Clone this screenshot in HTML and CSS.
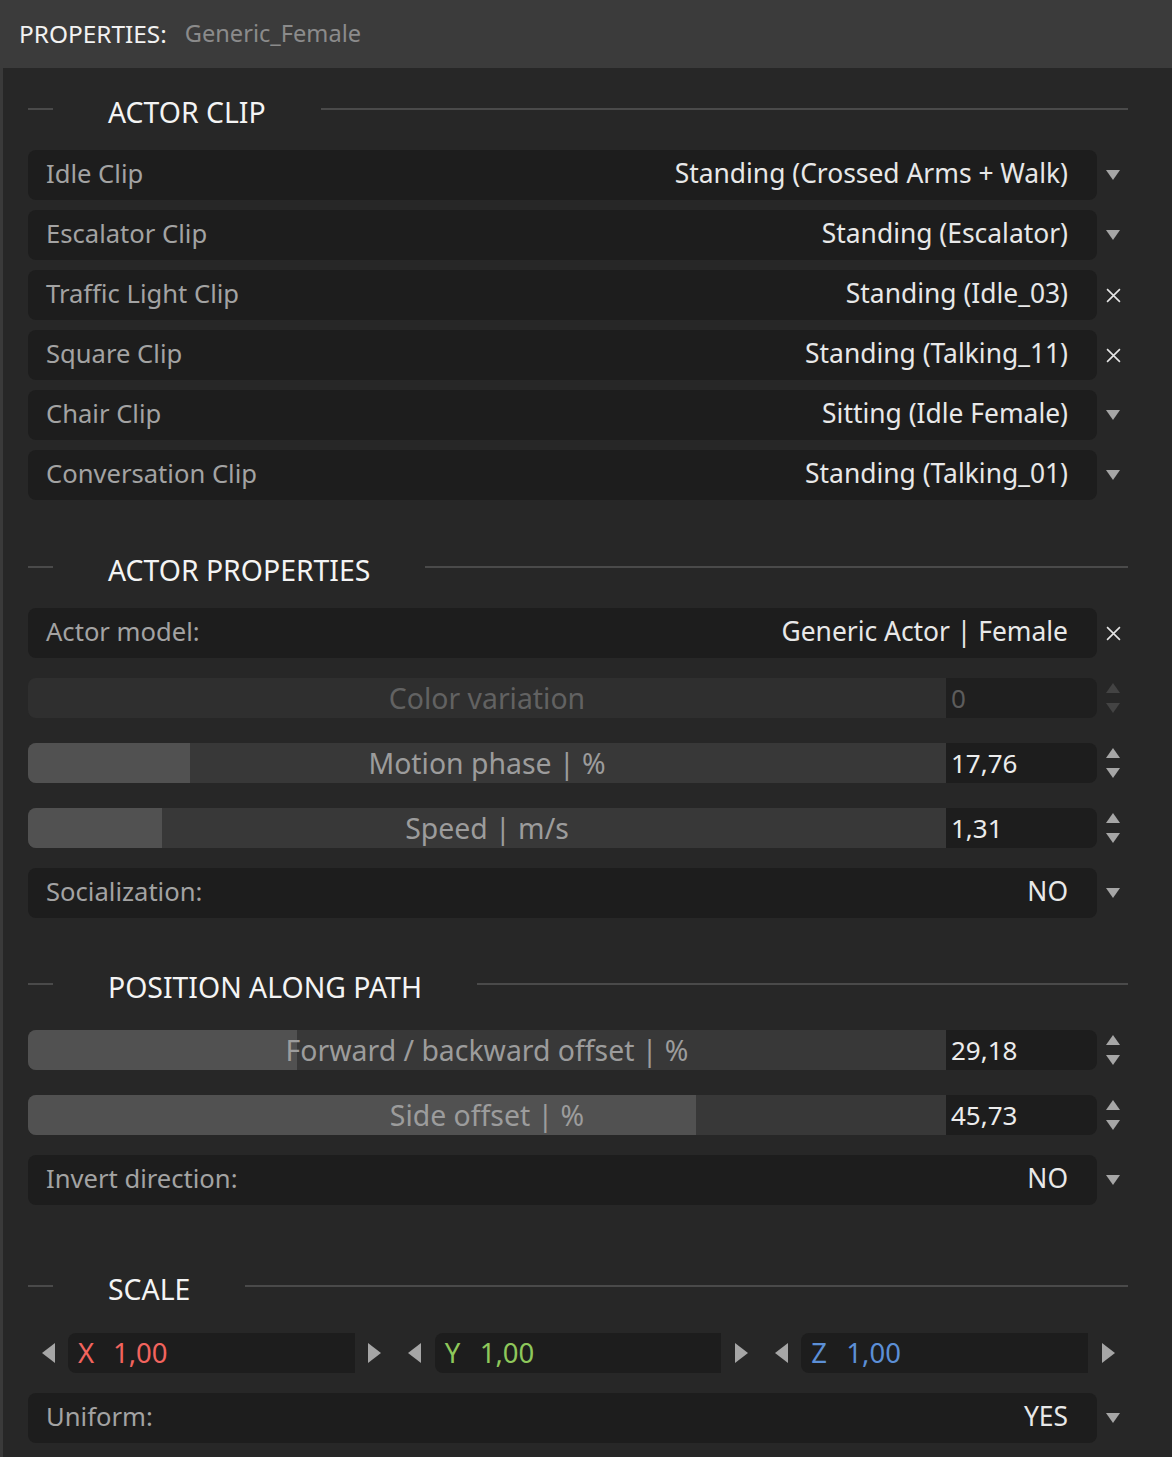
FILE: index.html
```html
<!DOCTYPE html>
<html>
<head>
<meta charset="utf-8">
<link rel="stylesheet" href="styles.css">
</head>
<body>
<div class="panel">
  <div class="titlebar"><span class="title">PROPERTIES:</span><span class="subject">Generic_Female</span></div>
  <div class="content">

    <section class="group first">
      <div class="group-head"><span class="rule short"></span><h2>ACTOR CLIP</h2><span class="rule long"></span></div>
      <div class="field"><div class="box"><span class="label">Idle Clip</span><span class="value">Standing (Crossed Arms + Walk)</span></div><span class="action"><svg class="tri-down" viewBox="0 0 14 10"><path d="M0 0H14L7 10Z"/></svg></span></div>
      <div class="field"><div class="box"><span class="label">Escalator Clip</span><span class="value">Standing (Escalator)</span></div><span class="action"><svg class="tri-down" viewBox="0 0 14 10"><path d="M0 0H14L7 10Z"/></svg></span></div>
      <div class="field"><div class="box"><span class="label">Traffic Light Clip</span><span class="value">Standing (Idle_03)</span></div><span class="action"><svg class="cross" viewBox="0 0 14 14"><path d="M1 1L13 13M13 1L1 13"/></svg></span></div>
      <div class="field"><div class="box"><span class="label">Square Clip</span><span class="value">Standing (Talking_11)</span></div><span class="action"><svg class="cross" viewBox="0 0 14 14"><path d="M1 1L13 13M13 1L1 13"/></svg></span></div>
      <div class="field"><div class="box"><span class="label">Chair Clip</span><span class="value">Sitting (Idle Female)</span></div><span class="action"><svg class="tri-down" viewBox="0 0 14 10"><path d="M0 0H14L7 10Z"/></svg></span></div>
      <div class="field"><div class="box"><span class="label">Conversation Clip</span><span class="value">Standing (Talking_01)</span></div><span class="action"><svg class="tri-down" viewBox="0 0 14 10"><path d="M0 0H14L7 10Z"/></svg></span></div>
    </section>

    <section class="group g2">
      <div class="group-head"><span class="rule short"></span><h2>ACTOR PROPERTIES</h2><span class="rule long"></span></div>
      <div class="field"><div class="box"><span class="label">Actor model:</span><span class="value">Generic Actor | Female</span></div><span class="action"><svg class="cross" viewBox="0 0 14 14"><path d="M1 1L13 13M13 1L1 13"/></svg></span></div>

      <div class="slider-field disabled after-field">
        <div class="bar"><span class="bar-label">Color variation</span></div>
        <div class="num">0</div>
        <span class="action spin"><svg viewBox="0 0 14 10"><path d="M7 0L14 10H0Z"/></svg><svg viewBox="0 0 14 10"><path d="M0 0H14L7 10Z"/></svg></span>
      </div>
      <div class="slider-field after-slider">
        <div class="bar"><span class="fill" style="width:17.6%"></span><span class="bar-label">Motion phase | %</span></div>
        <div class="num">17,76</div>
        <span class="action spin"><svg viewBox="0 0 14 10"><path d="M7 0L14 10H0Z"/></svg><svg viewBox="0 0 14 10"><path d="M0 0H14L7 10Z"/></svg></span>
      </div>
      <div class="slider-field after-slider">
        <div class="bar"><span class="fill" style="width:14.6%"></span><span class="bar-label">Speed | m/s</span></div>
        <div class="num">1,31</div>
        <span class="action spin"><svg viewBox="0 0 14 10"><path d="M7 0L14 10H0Z"/></svg><svg viewBox="0 0 14 10"><path d="M0 0H14L7 10Z"/></svg></span>
      </div>
      <div class="field after-slider-field"><div class="box"><span class="label">Socialization:</span><span class="value">NO</span></div><span class="action"><svg class="tri-down" viewBox="0 0 14 10"><path d="M0 0H14L7 10Z"/></svg></span></div>
    </section>

    <section class="group g3">
      <div class="group-head"><span class="rule short"></span><h2>POSITION ALONG PATH</h2><span class="rule long"></span></div>
      <div class="slider-field after-head">
        <div class="bar"><span class="fill" style="width:29.3%"></span><span class="bar-label">Forward / backward offset | %</span></div>
        <div class="num">29,18</div>
        <span class="action spin"><svg viewBox="0 0 14 10"><path d="M7 0L14 10H0Z"/></svg><svg viewBox="0 0 14 10"><path d="M0 0H14L7 10Z"/></svg></span>
      </div>
      <div class="slider-field after-slider">
        <div class="bar"><span class="fill" style="width:72.8%"></span><span class="bar-label">Side offset | %</span></div>
        <div class="num">45,73</div>
        <span class="action spin"><svg viewBox="0 0 14 10"><path d="M7 0L14 10H0Z"/></svg><svg viewBox="0 0 14 10"><path d="M0 0H14L7 10Z"/></svg></span>
      </div>
      <div class="field after-slider-field"><div class="box"><span class="label">Invert direction:</span><span class="value">NO</span></div><span class="action"><svg class="tri-down" viewBox="0 0 14 10"><path d="M0 0H14L7 10Z"/></svg></span></div>
    </section>

    <section class="group g4">
      <div class="group-head"><span class="rule short"></span><h2>SCALE</h2><span class="rule long"></span></div>
      <div class="vector">
        <div class="axis">
          <span class="step"><svg viewBox="0 0 13 20"><path d="M13 0V20L0 10Z"/></svg></span>
          <div class="axis-box x"><span class="axis-name">X</span><span class="axis-val">1,00</span></div>
          <span class="step"><svg viewBox="0 0 13 20"><path d="M0 0V20L13 10Z"/></svg></span>
        </div>
        <div class="axis">
          <span class="step"><svg viewBox="0 0 13 20"><path d="M13 0V20L0 10Z"/></svg></span>
          <div class="axis-box y"><span class="axis-name">Y</span><span class="axis-val">1,00</span></div>
          <span class="step"><svg viewBox="0 0 13 20"><path d="M0 0V20L13 10Z"/></svg></span>
        </div>
        <div class="axis">
          <span class="step"><svg viewBox="0 0 13 20"><path d="M13 0V20L0 10Z"/></svg></span>
          <div class="axis-box z"><span class="axis-name">Z</span><span class="axis-val">1,00</span></div>
          <span class="step"><svg viewBox="0 0 13 20"><path d="M0 0V20L13 10Z"/></svg></span>
        </div>
      </div>
      <div class="field after-vector"><div class="box"><span class="label">Uniform:</span><span class="value">YES</span></div><span class="action"><svg class="tri-down" viewBox="0 0 14 10"><path d="M0 0H14L7 10Z"/></svg></span></div>
    </section>

  </div>
</div>
</body>
</html>
```

FILE: styles.css
```css
* { box-sizing: border-box; }
html, body { margin: 0; padding: 0; background: #272727; }
body {
  font-family: "Noto Sans", "Open Sans", sans-serif;
  font-size: 26px;
  color: #e6e6e6;
}
.panel { width: 1172px; min-height: 1457px; display: flex; flex-direction: column; }

.titlebar {
  height: 68px;
  background: #3b3b3b;
  display: flex;
  align-items: center;
  padding: 0 0 2px 19px;
  font-size: 24.4px;
}
.title { color: #f2f2f2; }
.subject { color: #8b8b8b; margin-left: 18px; font-size: 23.6px; }

.content {
  flex: 1;
  background: #272727;
  border-left: 3px solid #3a3a3a;
  padding: 25px 44px 0 25px;
}

.group-head {
  height: 40px;
  display: flex;
  align-items: center;
  margin-bottom: 17px;
}
.group-head h2 {
  margin: 0 55px;
  padding-bottom: 3px;
  font-weight: normal;
  font-size: 28.4px;
  color: #f4f4f4;
  white-space: nowrap;
}
.rule { height: 2px; background: #4a4a4a; margin-bottom: 8px; }
.rule.short { width: 25px; }
.rule.long { flex: 1; }

.g2 { margin-top: 51px; }
.g3 { margin-top: 50px; }
.g4 { margin-top: 65px; }

.field { display: flex; height: 50px; }
.field + .field { margin-top: 10px; }
.after-slider-field { margin-top: 20px; }
.after-vector { margin-top: 20px; }

.box {
  flex: 1;
  background: #1d1d1d;
  border-radius: 8px;
  display: flex;
  align-items: center;
  justify-content: space-between;
  padding: 0 29px 4px 18px;
}
.label { color: #a3a3a3; font-size: 25.6px; }
.value { color: #e8e8e8; font-size: 26.4px; }

.action {
  width: 31px;
  display: flex;
  align-items: center;
  justify-content: center;
  padding-left: 1px;
}
.tri-down { width: 14px; height: 10px; fill: #a6a6a6; }
.cross { width: 15px; height: 15px; stroke: #e4e4e4; stroke-width: 1.5; fill: none; }

.slider-field { display: flex; height: 40px; }
.after-field { margin-top: 20px; }
.after-slider { margin-top: 25px; }
.after-head { margin-top: 22px; }

.bar {
  flex: 1;
  background: #383838;
  border-radius: 8px 0 0 8px;
  position: relative;
  overflow: hidden;
  display: flex;
  align-items: center;
  justify-content: center;
  padding-bottom: 1px;
}
.fill {
  position: absolute;
  left: 0; top: 0; bottom: 0;
  background: #515151;
}
.bar-label { position: relative; color: #9c9c9c; font-size: 28.4px; }
.num {
  width: 151px;
  background: #1d1d1d;
  border-radius: 0 8px 8px 0;
  display: flex;
  align-items: center;
  padding: 0 0 1px 5px;
  color: #ececec;
}
.spin { flex-direction: column; gap: 10px; }
.spin svg { width: 14px; height: 10px; fill: #a6a6a6; display: block; }

.disabled .bar { background: #2f2f2f; }
.disabled .bar-label { color: #626262; }
.disabled .num { background: #1f1f1f; color: #5c5c5c; }
.disabled .spin svg { fill: #434343; }

.vector { display: flex; height: 40px; margin-top: 23px; }
.axis { flex: 1; display: flex; }
.step { width: 40px; display: flex; align-items: center; justify-content: center; }
.step svg { width: 13px; height: 20px; fill: #a6a6a6; }
.axis-box {
  flex: 1;
  background: #1d1d1d;
  border-radius: 8px 0 0 8px;
  display: flex;
  align-items: center;
  padding: 0 0 2px 10px;
  font-size: 27.5px;
}
.axis-name { width: 35px; }
.x { color: #f2645e; }
.y { color: #8ec85b; }
.z { color: #5c8fd6; }
```
